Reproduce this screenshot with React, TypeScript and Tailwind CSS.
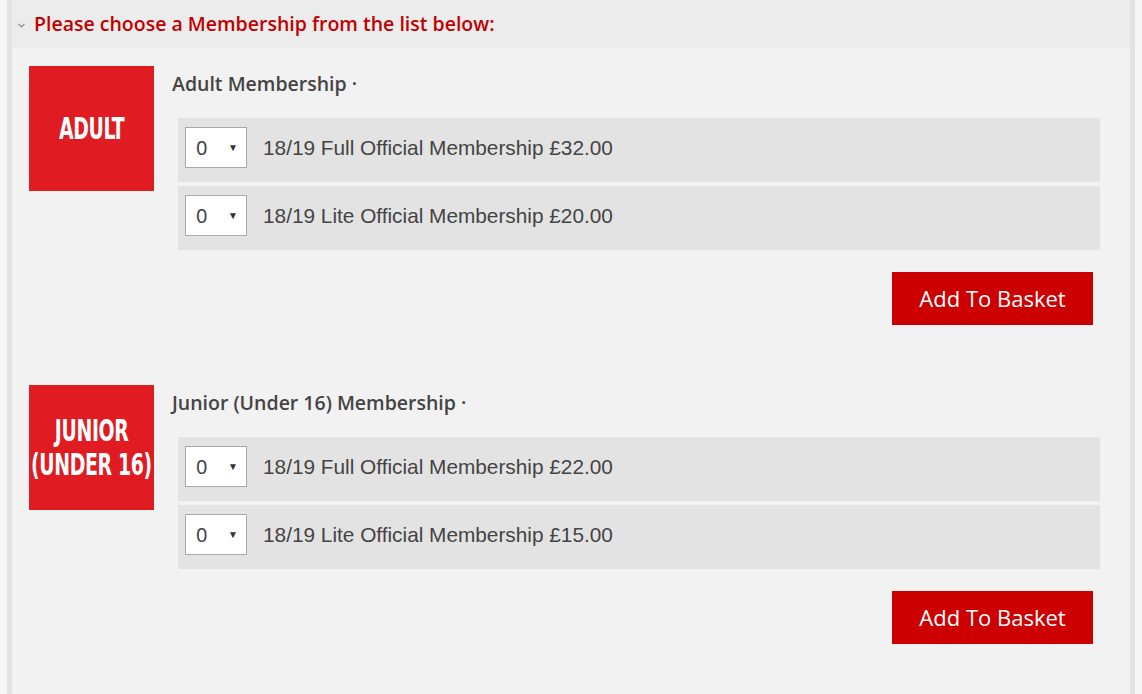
const sections = [
  {
    badge: ['ADULT'],
    title: 'Adult Membership',
    items: [
      '18/19 Full Official Membership £32.00',
      '18/19 Lite Official Membership £20.00',
    ],
  },
  {
    badge: ['JUNIOR', '(UNDER 16)'],
    title: 'Junior (Under 16) Membership',
    items: [
      '18/19 Full Official Membership £22.00',
      '18/19 Lite Official Membership £15.00',
    ],
  },
];

const QtySelect = () => (
  <div className="flex h-[41px] w-[62px] items-center justify-between border border-[#a9a9a9] bg-white pl-[10px] pr-[8px] text-[20px] text-[#444]">
    <span>0</span>
    <span className="text-[10px] text-[#333]">▼</span>
  </div>
);

const MembershipBlock = ({ badge, title, items }: (typeof sections)[number]) => (
  <div className="flex">
    <div
      className="flex h-[125px] w-[125px] shrink-0 flex-col items-center justify-center bg-[#e11b22] text-white"
      style={{ fontFamily: '"DejaVu Sans Condensed", "DejaVu Sans", sans-serif' }}
    >
      {badge.map((line) => (
        <span key={line} className="block origin-center scale-x-[0.7] whitespace-nowrap text-[30px] font-bold leading-[34px] tracking-[-0.5px]">
          {line}
        </span>
      ))}
    </div>
    <div className="ml-[18px] flex-1">
      <h3 className="mt-[4px] text-[19.5px] font-semibold leading-[28px] text-[#444]" style={{ fontFamily: '"Open Sans", sans-serif' }}>
        {title} ·
      </h3>
      <div className="ml-[6px] mt-[20px] flex flex-col gap-[4px]">
        {items.map((item) => (
          <div key={item} className="flex h-[64px] items-start bg-[#e3e3e3] pl-[7px] pt-[9px]">
            <QtySelect />
            <span className="ml-[16px] text-[20.8px] leading-[41px] text-[#444]" style={{ fontFamily: '"Liberation Sans", Arial, sans-serif' }}>
              {item}
            </span>
          </div>
        ))}
      </div>
      <div className="mr-[7px] mt-[22px] flex justify-end">
        <button
          className="h-[53px] w-[201px] bg-[#cc0000] text-[22px] text-white"
          style={{ fontFamily: '"Open Sans", sans-serif' }}
        >
          Add To Basket
        </button>
      </div>
    </div>
  </div>
);

export default function App() {
  return (
    <div className="min-h-[694px] bg-[#f6f6f6] pl-[7px] pr-[7px]">
      <div className="min-h-[694px] border-x-[5px] border-[#e3e3e3] bg-[#f2f2f2]">
        <div className="flex h-[48px] items-center bg-[#ececec] pl-[6px]">
          <svg width="7" height="5" viewBox="0 0 7 5" className="mr-[9px] mt-[2px]">
            <path d="M0.5 0.8 L3.5 3.8 L6.5 0.8" fill="none" stroke="#888" strokeWidth="1.2" />
          </svg>
          <h2 className="text-[19.5px] font-semibold text-[#c00000]" style={{ fontFamily: '"Open Sans", sans-serif' }}>
            Please choose a Membership from the list below:
          </h2>
        </div>
        <div className="flex flex-col gap-[60px] pl-[17px] pr-[30px] pt-[18px]">
          {sections.map((s) => (
            <MembershipBlock key={s.title} {...s} />
          ))}
        </div>
      </div>
    </div>
  );
}
